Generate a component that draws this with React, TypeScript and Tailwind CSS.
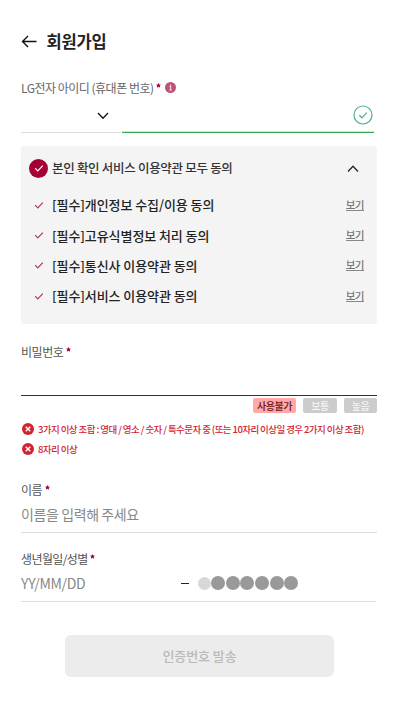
const terms = [
  "[필수]개인정보 수집/이용 동의",
  "[필수]고유식별정보 처리 동의",
  "[필수]통신사 이용약관 동의",
  "[필수]서비스 이용약관 동의",
];

const rules = [
  {
    text: "3가지 이상 조합 : 영대 / 영소 / 숫자 / 특수문자 중 (또는 10자리 이상일 경우 2가지 이상 조합)",
    tracking: "tracking-[-0.58px]",
  },
  { text: "8자리 이상", tracking: "tracking-[-0.55px]" },
];

function Required() {
  return (
    <svg viewBox="0 0 6 6" className="mb-[5px] ml-[2.5px] h-[5px] w-[5px]" aria-hidden="true">
      <path
        d="M3 0 3.9 1.7 6 2 4.5 3.4 5 5.6 3 4.6 1 5.6 1.5 3.4 0 2 2.1 1.7Z"
        fill="#a50034"
      />
    </svg>
  );
}

function CheckIcon({ className }: { className: string }) {
  return (
    <svg viewBox="0 0 10 10" className={className} fill="none" stroke="currentColor">
      <path d="M1.2 5.2 3.8 7.8 8.8 2.6" strokeWidth="1.2" />
    </svg>
  );
}

function ErrorIcon() {
  return (
    <svg viewBox="0 0 12 12" className="h-3 w-3 shrink-0">
      <circle cx="6" cy="6" r="6" fill="#d32230" />
      <path d="M3.7 3.7 8.3 8.3M8.3 3.7 3.7 8.3" stroke="#fff" strokeWidth="1.4" />
    </svg>
  );
}

export default function App() {
  return (
    <div className="h-[720px] w-[400px] overflow-hidden bg-white pl-[21px] font-['Noto_Sans_CJK_KR','Noto_Sans',sans-serif] whitespace-nowrap">
      {/* Header */}
      <header className="flex h-[84px] items-center">
        <svg viewBox="0 0 16 14" className="h-[14px] w-4" fill="none" stroke="#111" strokeWidth="1.4">
          <path d="M15.5 6.5H1.5M7 1 1.5 6.5 7 12" />
        </svg>
        <h1 className="ml-[9.5px] pb-px text-[16.5px] font-bold tracking-[-0.2px] text-[#222]">회원가입</h1>
      </header>

      {/* ID */}
      <div className="mt-[-3px] flex h-[14px] items-center text-[12px] tracking-[-0.5px] text-[#666]">
        <span>LG전자 아이디 (휴대폰 번호)</span>
        <Required />
        <svg viewBox="0 0 12 12" className="mb-px ml-1 h-[11px] w-[11px]">
          <circle cx="6" cy="6" r="6" fill="#bd537a" />
          <path d="M6 2.6v1.5M5 5h1.2v3.6M4.8 8.8h2.6" fill="none" stroke="#f7e4ec" strokeWidth="1.1" />
        </svg>
      </div>
      <div className="flex h-[38px] gap-[1px]">
        <div className="flex w-[100px] items-center justify-end border-b border-[#ddd] pr-3">
          <svg viewBox="0 0 12 8" className="mt-[4px] h-2 w-3" fill="none" stroke="#111" strokeWidth="1.3">
            <path d="M1 1 6 6.2 11 1" />
          </svg>
        </div>
        <div className="flex w-[252px] items-center justify-end border-b border-[#35a853] pr-px shadow-[inset_0_-0.5px_0_#9ad3a9]">
          <svg viewBox="0 0 20 20" className="mt-[2px] h-5 w-5" fill="none" stroke="#4fae8c">
            <circle cx="10" cy="10" r="9" strokeWidth="1.2" />
            <path d="M6.3 10.2 9 12.8 13.8 7.6" strokeWidth="1.2" />
          </svg>
        </div>
      </div>

      {/* Terms */}
      <section className="mt-[13px] h-[178px] w-[356px] rounded-[3px] bg-[#f4f4f4] px-2 pt-[3px]">
        <div className="flex h-[38px] items-center">
          <span className="flex h-[19px] w-[19px] items-center justify-center rounded-full bg-[#a50034]">
            <CheckIcon className="h-[10px] w-[10px] text-white" />
          </span>
          <span className="ml-1 text-[12.5px] font-medium tracking-[-0.3px] text-[#333]">
            본인 확인 서비스 이용약관 모두 동의
          </span>
          <svg viewBox="0 0 12 8" className="mt-[2px] mr-[10px] ml-auto h-2 w-3" fill="none" stroke="#222" strokeWidth="1.3">
            <path d="M1 6.5 6 1.3 11 6.5" />
          </svg>
        </div>
        <ul className="mt-[3px]">
          {terms.map((term) => (
            <li key={term} className="flex h-[30.2px] items-center">
              <CheckIcon className="ml-[5px] h-[10px] w-[10px] text-[#b23461]" />
              <span className="ml-2 text-[13px] font-medium tracking-[-0.08px] text-[#222]">{term}</span>
              <span className="mr-[5px] ml-auto border-b border-[#888] text-[10.5px] leading-[11px] font-medium tracking-[-0.5px] text-[#777]">
                보기
              </span>
            </li>
          ))}
        </ul>
      </section>

      {/* Password */}
      <section className="mt-[19px]">
        <div className="flex h-[18px] items-center text-[12px] tracking-[-0.45px] text-[#555]">
          비밀번호
          <Required />
        </div>
        <div className="h-[35px] w-[356px] border-b border-[#333]" />
        <div className="mt-[2px] flex h-[15px] w-[356px] justify-end gap-[7px] text-[10px] leading-[15px] font-medium tracking-[-0.4px]">
          <span className="w-[43px] rounded-[2px] bg-[#ffa9a9] text-center text-[#6e1115]">사용불가</span>
          <span className="w-[34px] rounded-[2px] bg-[#ccc] text-center text-[#f5f5f5]">보통</span>
          <span className="w-[33px] rounded-[2px] bg-[#ccc] text-center text-[#f5f5f5]">높음</span>
        </div>
        <ul className="mt-[6px]">
          {rules.map((rule) => (
            <li key={rule.text} className="flex h-5 items-center gap-1 pl-[1px] text-[9.5px] font-medium text-[#d32230]">
              <ErrorIcon />
              <span className={rule.tracking}>{rule.text}</span>
            </li>
          ))}
        </ul>
      </section>

      {/* Name */}
      <section className="mt-[22px]">
        <div className="flex h-[18px] items-center text-[12px] tracking-[-0.45px] text-[#555]">
          이름
          <Required />
        </div>
        <div className="flex h-[34px] w-[356px] items-center border-b border-[#ddd] pb-[3px] text-[14px] tracking-[-0.4px] text-[#888]">
          이름을 입력해 주세요
        </div>
      </section>

      {/* Birth date */}
      <section className="mt-[17px]">
        <div className="flex h-[18px] items-center text-[12px] tracking-[-0.6px] text-[#555]">
          생년월일/성별
          <Required />
        </div>
        <div className="flex h-[34px] w-[355px] items-center border-b border-[#ddd] pb-[3px] text-[14px] tracking-[-0.3px] text-[#888]">
          <span className="w-[160px]">YY/MM/DD</span>
          <span className="mt-px h-px w-2 bg-[#222]" />
          <span className="ml-[9px] h-[13px] w-[13px] rounded-full bg-[#d8d8d8]" />
          <span className="flex gap-[0.7px]">
            {[1, 2, 3, 4, 5, 6].map((n) => (
              <span key={n} className="h-[14px] w-[14px] rounded-full bg-[#999]" />
            ))}
          </span>
        </div>
      </section>

      <button className="mt-[33px] ml-[44px] h-[42px] w-[269px] rounded-[6px] bg-[#ececec] text-[13px] font-medium tracking-[-0.1px] text-[#b9b9b9]">
        인증번호 발송
      </button>
    </div>
  );
}
